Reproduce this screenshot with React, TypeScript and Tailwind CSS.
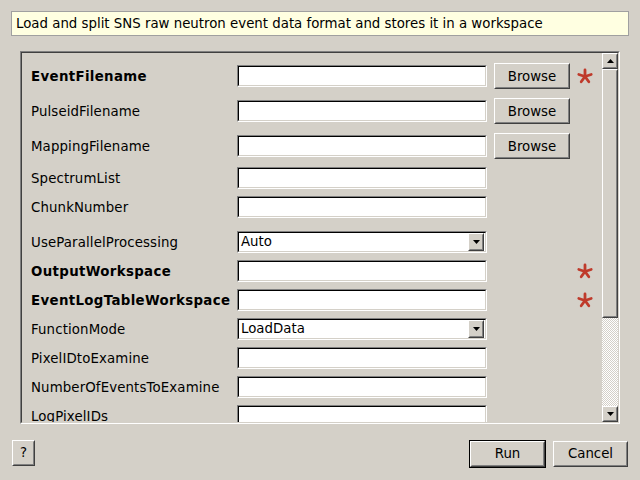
import type { ReactNode } from 'react'

type Kind = 'browse' | 'text' | 'combo'

interface Prop {
  label: string
  kind: Kind
  bold?: boolean
  required?: boolean
  value?: string
  gap: string
}

const props: Prop[] = [
  { label: 'EventFilename', kind: 'browse', bold: true, required: true, gap: 'mt-0' },
  { label: 'PulseidFilename', kind: 'browse', gap: 'mt-[13px]' },
  { label: 'MappingFilename', kind: 'browse', gap: 'mt-[13px]' },
  { label: 'SpectrumList', kind: 'text', gap: 'mt-[10px]' },
  { label: 'ChunkNumber', kind: 'text', gap: 'mt-[7px]' },
  { label: 'UseParallelProcessing', kind: 'combo', value: 'Auto', gap: 'mt-[13px]' },
  { label: 'OutputWorkspace', kind: 'text', bold: true, required: true, gap: 'mt-[7px]' },
  { label: 'EventLogTableWorkspace', kind: 'text', bold: true, required: true, gap: 'mt-[7px]' },
  { label: 'FunctionMode', kind: 'combo', value: 'LoadData', gap: 'mt-[7px]' },
  { label: 'PixelIDtoExamine', kind: 'text', gap: 'mt-[7px]' },
  { label: 'NumberOfEventsToExamine', kind: 'text', gap: 'mt-[7px]' },
  { label: 'LogPixelIDs', kind: 'text', gap: 'mt-[7px]' },
]

function Sunken({ children, className = '' }: { children?: ReactNode; className?: string }) {
  return (
    <div className={`border border-t-[#808080] border-l-[#808080] border-b-white border-r-white ${className}`}>
      <div className="h-full border border-t-black border-l-black border-b-[#d4d0c8] border-r-[#d4d0c8] bg-white">
        {children}
      </div>
    </div>
  )
}

function Raised({ children, className = '' }: { children?: ReactNode; className?: string }) {
  return (
    <div className={`border border-t-white border-l-white border-b-[#404040] border-r-[#404040] bg-[#d4d0c8] ${className}`}>
      <div className="flex h-full items-center justify-center border border-t-[#d4d0c8] border-l-[#d4d0c8] border-b-[#808080] border-r-[#808080]">
        {children}
      </div>
    </div>
  )
}

function Asterisk() {
  return (
    <svg width="16" height="16" viewBox="0 0 16 16" aria-hidden="true">
      <g stroke="#bf3a2b" strokeWidth="2.8" strokeLinecap="round">
        <line x1="8" y1="8.5" x2="8" y2="2" />
        <line x1="8" y1="8.5" x2="14.2" y2="6.5" />
        <line x1="8" y1="8.5" x2="11.8" y2="13.8" />
        <line x1="8" y1="8.5" x2="4.2" y2="13.8" />
        <line x1="8" y1="8.5" x2="1.8" y2="6.5" />
      </g>
    </svg>
  )
}

function Triangle({ up = false }: { up?: boolean }) {
  return (
    <svg width="7" height="4" viewBox="0 0 7 4" aria-hidden="true">
      <path d={up ? 'M0 4 L3.5 0 L7 4 Z' : 'M0 0 L7 0 L3.5 4 Z'} fill="#000" />
    </svg>
  )
}

function Row({ p }: { p: Prop }) {
  return (
    <div className={`flex h-[22px] shrink-0 items-center ${p.gap}`}>
      <span
        className={`w-[206px] shrink-0 whitespace-nowrap pt-px text-black ${
          p.bold ? 'font-bold tracking-[0.35px]' : 'tracking-[0.12px]'
        }`}
      >
        {p.label}
      </span>
      {p.kind === 'combo' ? (
        <Sunken className="h-[22px] w-[250px] shrink-0">
          <div className="flex h-full items-center pl-[2px]">
            <span className="flex-1 leading-none">{p.value}</span>
            <Raised className="mr-px h-[18px] w-[16px]">
              <Triangle />
            </Raised>
          </div>
        </Sunken>
      ) : (
        <Sunken className="h-[22px] w-[250px] shrink-0" />
      )}
      {p.kind === 'browse' && (
        <Raised className="ml-[7px] h-[26px] w-[76px] shrink-0">
          <span className="pt-px">Browse</span>
        </Raised>
      )}
      {p.required && (
        <div className={`${p.kind === 'browse' ? 'ml-[7px]' : 'ml-[90px]'} flex shrink-0`}>
          <Asterisk />
        </div>
      )}
    </div>
  )
}

export default function App() {
  return (
    <div className="flex h-[480px] w-[640px] flex-col overflow-hidden bg-[#d4d0c8] font-['DejaVu_Sans',sans-serif] text-[13.33px] text-black">
      <div className="ml-[11px] mt-[11px] flex h-[25px] w-[618px] items-center border border-[#a0a0a0] bg-[#ffffe1] pl-[4px]">
        Load and split SNS raw neutron event data format and stores it in a workspace
      </div>

      <div className="ml-[20px] mt-[15px] h-[373px] w-[600px] border border-t-[#808080] border-l-[#808080] border-b-white border-r-white">
        <div className="flex h-full border border-t-[#404040] border-l-[#404040] border-b-[#d4d0c8] border-r-[#d4d0c8]">
          <div className="flex flex-1 flex-col overflow-hidden pl-[9px] pt-[12px]">
            {props.map((p) => (
              <Row key={p.label} p={p} />
            ))}
          </div>
          <div className="flex w-[16px] flex-col">
            <Raised className="h-[16px] shrink-0">
              <Triangle up />
            </Raised>
            <Raised className="h-[249px] shrink-0" />
            <div className="flex-1 bg-[repeating-conic-gradient(#ffffff_0_25%,#d4d0c8_0_50%)] bg-[length:2px_2px]" />
            <Raised className="h-[16px] shrink-0">
              <Triangle />
            </Raised>
          </div>
        </div>
      </div>

      <div className="mt-[16px] flex items-start">
        <Raised className="ml-[12px] h-[26px] w-[23px]">
          <span>?</span>
        </Raised>
        <div className="ml-auto flex h-[28px] w-[77px] border border-black">
          <Raised className="h-full w-full">
            <span>Run</span>
          </Raised>
        </div>
        <Raised className="ml-[7px] mr-[12px] mt-px h-[26px] w-[75px]">
          <span>Cancel</span>
        </Raised>
      </div>
    </div>
  )
}
